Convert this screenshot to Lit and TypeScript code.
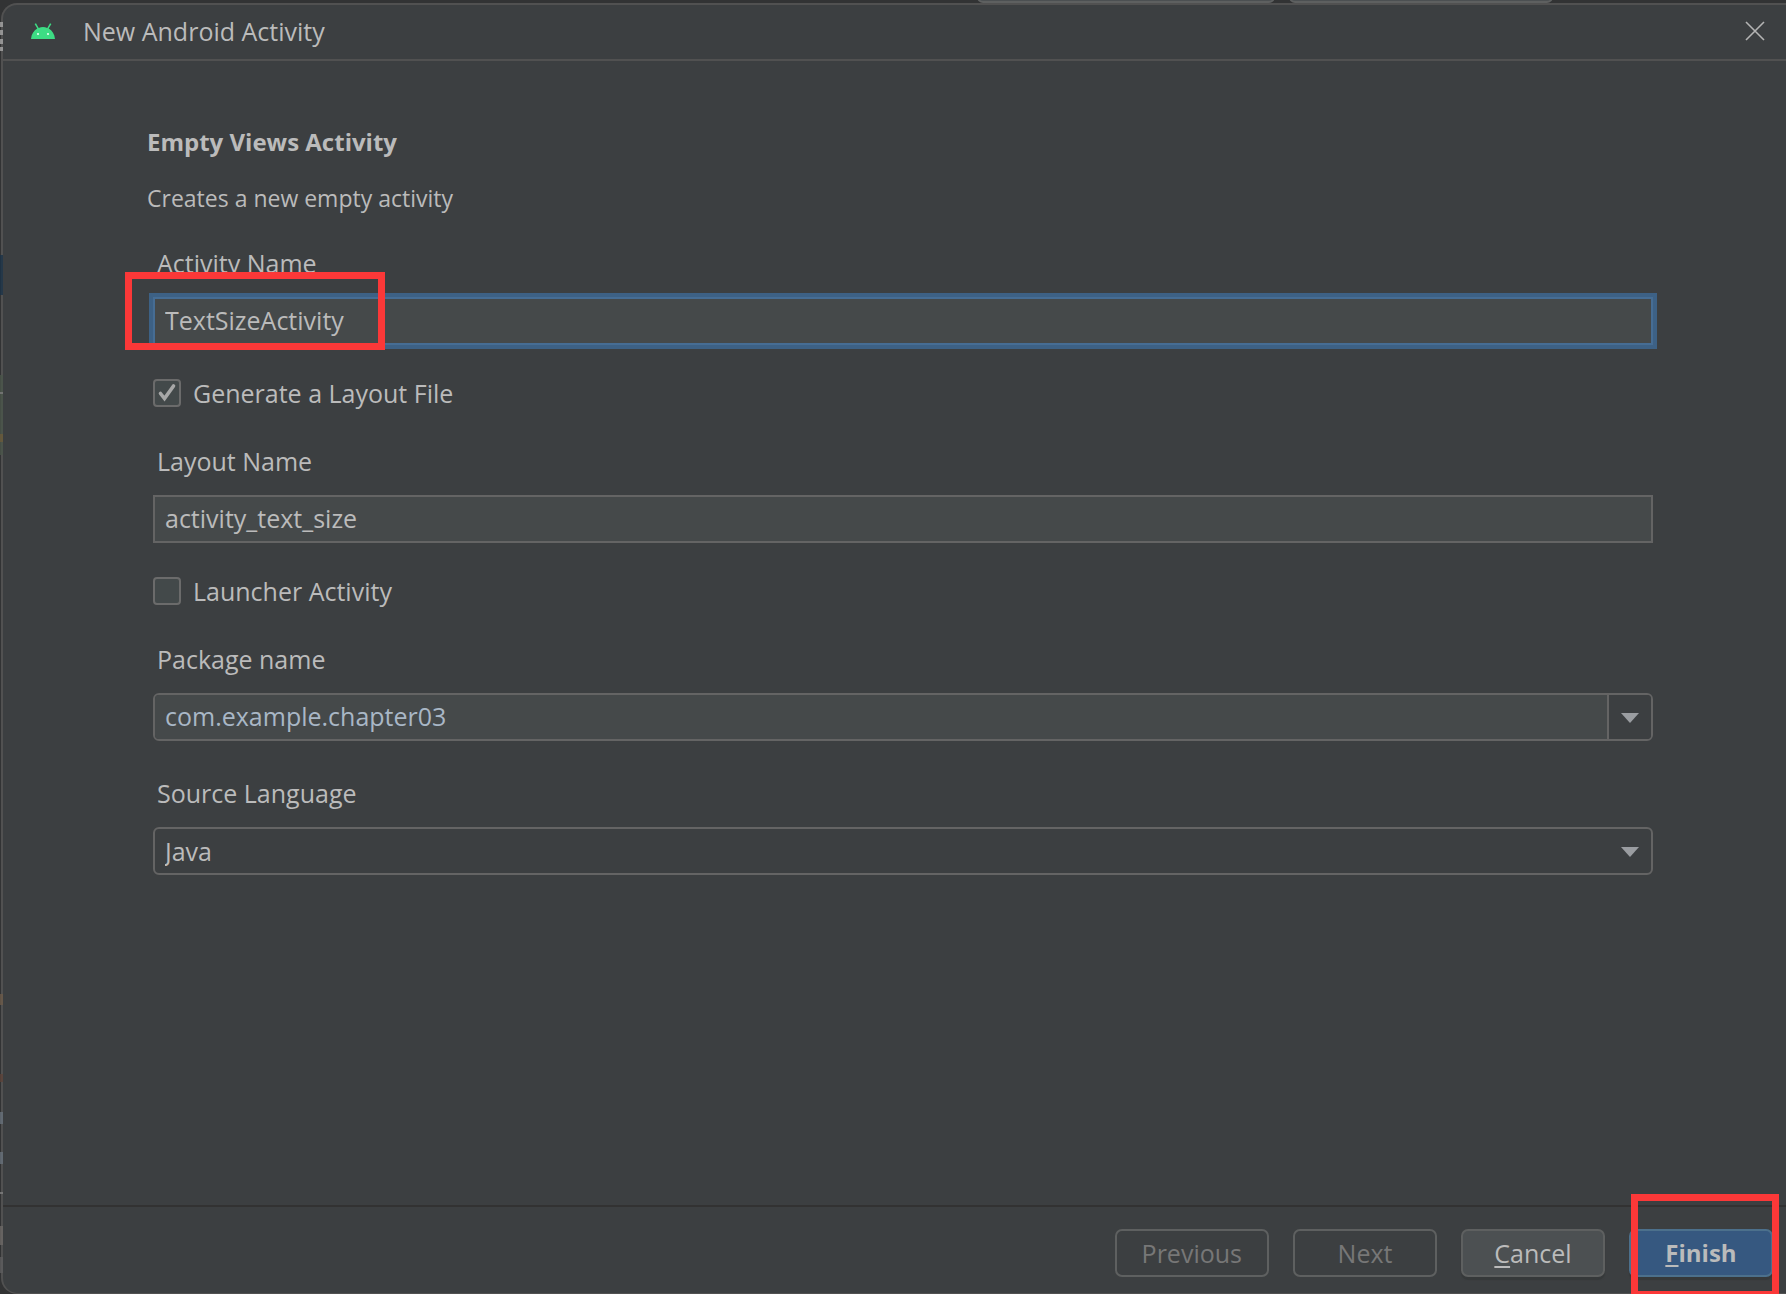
import { LitElement, html, css, svg } from "lit";
import { customElement, state } from "lit/decorators.js";

const arrow = html`<svg class="arrow" viewBox="0 0 18 10" aria-hidden="true">
  <path d="M0 0H18L9 10Z" fill="#9a9da1" />
</svg>`;

/* Slivers of the editor window that stay visible at the dialog's left edge. */
const slivers: Array<[number, number, string]> = [
  [22, 5, "#a6a6a6"],
  [30, 5, "#a6a6a6"],
  [39, 5, "#a6a6a6"],
  [47, 4, "#a6a6a6"],
  [255, 40, "#1a3247"],
  [375, 80, "#4a554a"],
  [392, 2, "#7a7a7a"],
  [434, 8, "#6a5a3a"],
  [994, 11, "#6c5a48"],
  [1074, 8, "#5c4238"],
  [1112, 12, "#66707a"],
  [1152, 12, "#66707a"],
  [1192, 2, "#808080"],
  [1226, 19, "#6b6865"],
  [1257, 16, "#5c5d5e"],
];

@customElement("app-root")
export class AppRoot extends LitElement {
  static styles = css`
    :host {
      display: block;
      position: relative;
      height: 100vh;
      overflow: hidden;
      background: #323334;
      color: #bbbbbb;
      font-family: "Open Sans", "Noto Sans", sans-serif;
      font-size: 25px;
      line-height: 36px;
    }
    * {
      box-sizing: border-box;
    }
    .backdrop {
      position: absolute;
      inset: 0;
      width: 100%;
      height: 100%;
      pointer-events: none;
    }
    .dialog {
      position: relative;
      display: flex;
      flex-direction: column;
      height: calc(100vh - 3px);
      margin: 3px 0 0 1px;
      border: 2px solid #515151;
      border-right: 0;
      border-bottom-width: 1px;
      border-radius: 16px 0 0 16px;
      background: #3c3f41;
    }
    .titlebar {
      display: flex;
      align-items: center;
      height: 56px;
      flex: none;
      padding: 0 21px 2px 28px;
      border-bottom: 2px solid #515151;
    }
    .logo {
      width: 24px;
      height: 16px;
      margin-right: 28px;
    }
    .title {
      flex: 1;
      margin: 0;
      font-size: 25px;
      font-weight: 400;
    }
    .close {
      display: flex;
      padding: 0;
      border: 0;
      background: none;
    }
    .close svg {
      width: 20px;
      height: 20px;
    }
    .content {
      flex: 1;
      display: flex;
      flex-direction: column;
      padding: 63px 133px 0 150px;
    }
    .heading {
      margin: 0 0 20px -6px;
      font-size: 24px;
      font-weight: 700;
    }
    .intro {
      margin: 0 0 29px -6px;
      font-size: 23px;
    }
    .field {
      position: relative;
      display: flex;
      flex-direction: column;
      gap: 16px;
    }
    .label {
      padding-left: 4px;
    }
    .text {
      width: 100%;
      height: 48px;
      padding: 0 10px 2px;
      border: 2px solid #646464;
      border-radius: 0;
      outline: 0;
      background: #45494a;
      color: #bbbbbb;
      font: inherit;
    }
    .text.focused {
      border-color: #466d94;
      box-shadow: 0 0 0 4px #3d6185;
    }
    .check {
      display: flex;
      align-items: center;
      gap: 12px;
      height: 28px;
      margin: 34px 0 36px;
    }
    .box {
      appearance: none;
      width: 28px;
      height: 28px;
      margin: 0;
      border: 2px solid #6b6b6b;
      border-radius: 4px;
      background: #43494a;
    }
    .tick {
      display: grid;
    }
    .tick > * {
      grid-area: 1 / 1;
    }
    .tick svg {
      width: 28px;
      height: 28px;
      pointer-events: none;
    }
    .combo {
      display: flex;
      height: 48px;
      border: 2px solid #646464;
      border-radius: 6px;
      overflow: hidden;
    }
    .combo .text {
      flex: 1;
      height: 100%;
      border: 0;
      color: #a9b7c6;
    }
    .drop {
      display: flex;
      align-items: center;
      justify-content: center;
      width: 44px;
      padding: 2px 0 0;
      border: 0;
      border-left: 2px solid #646464;
      background: #3c3f41;
    }
    .arrow {
      width: 18px;
      height: 10px;
    }
    .source {
      margin-top: 34px;
    }
    .picker {
      display: grid;
      align-items: center;
    }
    .picker > * {
      grid-area: 1 / 1;
    }
    .picker .arrow {
      justify-self: end;
      margin-top: 2px;
      margin-right: 14px;
      pointer-events: none;
    }
    .select {
      appearance: none;
      width: 100%;
      height: 48px;
      padding: 0 10px;
      border: 2px solid #646464;
      border-radius: 6px;
      background: #3c3f41;
      color: #bbbbbb;
      font: inherit;
    }
    .footer {
      display: flex;
      justify-content: flex-end;
      gap: 24px;
      flex: none;
      padding: 22px 13px 16px;
      border-top: 2px solid #323232;
    }
    .button {
      min-width: 144px;
      height: 48px;
      padding: 0 25px;
      border: 2px solid #5e6060;
      border-radius: 7px;
      background: #4c5052;
      box-shadow: 0 3px 1px #36393a;
      color: #bbbbbb;
      font: inherit;
    }
    .button:disabled {
      background: none;
      box-shadow: none;
      color: #777777;
    }
    .primary {
      border-color: #4c708c;
      background: #365880;
      font-size: 24px;
      font-weight: 700;
    }
    .key {
      text-decoration: underline;
      text-decoration-thickness: 2px;
      text-underline-offset: 3px;
    }
    .action {
      position: relative;
    }
    .mark {
      position: absolute;
      border: 7px solid #fb3838;
      pointer-events: none;
    }
    .mark-name {
      left: -28px;
      top: 27px;
      width: 260px;
      height: 78px;
    }
    .mark-finish {
      left: 2px;
      top: -35px;
      width: 148px;
      height: 104px;
    }
  `;

  @state() private layoutFile = true;

  render() {
    return html`
      <main class="dialog">
        <header class="titlebar">
          <svg class="logo" viewBox="0 0 24 16" aria-hidden="true">
            <path
              d="M0 16C.4 11.400 2.800 7.600 6.300 5.600L3.600 1.100 5 .300 7.700 4.900Q12 3.100 16.300 4.900L19 .300 20.400 1.100 17.700 5.600C21.200 7.600 23.600 11.400 24 16Z"
              fill="#3ddc84"
            />
            <circle cx="7" cy="11" r="1.100" fill="#e9fff2" />
            <circle cx="17" cy="11" r="1.100" fill="#e9fff2" />
          </svg>
          <h1 class="title">New Android Activity</h1>
          <button class="close" type="button" aria-label="Close">
            <svg viewBox="0 0 20 20" aria-hidden="true">
              <path d="M1 1L19 19M19 1L1 19" fill="none" stroke="#b4b4b4" stroke-width="1.600" />
            </svg>
          </button>
        </header>

        <section class="content">
          <h2 class="heading">Empty Views Activity</h2>
          <p class="intro">Creates a new empty activity</p>

          <div class="field">
            <label class="label" for="activity">Activity Name</label>
            <input class="text focused" id="activity" type="text" value="TextSizeActivity" spellcheck="false" />
            <span class="mark mark-name"></span>
          </div>

          <div class="check">
            <span class="tick">
              <input
                class="box"
                id="generate"
                type="checkbox"
                .checked=${this.layoutFile}
                @change=${(e: Event) => (this.layoutFile = (e.target as HTMLInputElement).checked)}
              />
              ${this.layoutFile
                ? html`<svg viewBox="0 0 28 28" aria-hidden="true">
                    <path
                      d="M7.500 14.500L11.500 19.500 20.500 7"
                      fill="none"
                      stroke="#a7a7a7"
                      stroke-width="3.600"
                      stroke-linecap="round"
                    />
                  </svg>`
                : null}
            </span>
            <label for="generate">Generate a Layout File</label>
          </div>

          <div class="field">
            <label class="label" for="layout">Layout Name</label>
            <input class="text" id="layout" type="text" value="activity_text_size" spellcheck="false" />
          </div>

          <div class="check">
            <input class="box" id="launcher" type="checkbox" />
            <label for="launcher">Launcher Activity</label>
          </div>

          <div class="field">
            <label class="label" for="package">Package name</label>
            <div class="combo">
              <input class="text" id="package" type="text" value="com.example.chapter03" spellcheck="false" />
              <button class="drop" type="button" aria-label="Show packages">${arrow}</button>
            </div>
          </div>

          <div class="field source">
            <label class="label" for="language">Source Language</label>
            <div class="picker">
              <select class="select" id="language">
                <option>Java</option>
                <option>Kotlin</option>
              </select>
              ${arrow}
            </div>
          </div>
        </section>

        <footer class="footer">
          <button class="button" type="button" disabled>Previous</button>
          <button class="button" type="button" disabled>Next</button>
          <button class="button" type="button"><span class="key">C</span>ancel</button>
          <div class="action">
            <button class="button primary" type="button"><span class="key">F</span>inish</button>
            <span class="mark mark-finish"></span>
          </div>
        </footer>
      </main>
      <svg class="backdrop" aria-hidden="true">
        <rect x="978" y="-20" width="296" height="22" rx="5" fill="#4c5052" stroke="#5e6060" stroke-width="2" />
        <rect x="1290" y="-20" width="262" height="22" rx="5" fill="#4c5052" stroke="#5e6060" stroke-width="2" />
        ${slivers.map(([y, h, fill]) => svg`<rect x="0" y=${y} width="3" height=${h} fill=${fill} opacity="0.8" />`)}
      </svg>
    `;
  }
}
